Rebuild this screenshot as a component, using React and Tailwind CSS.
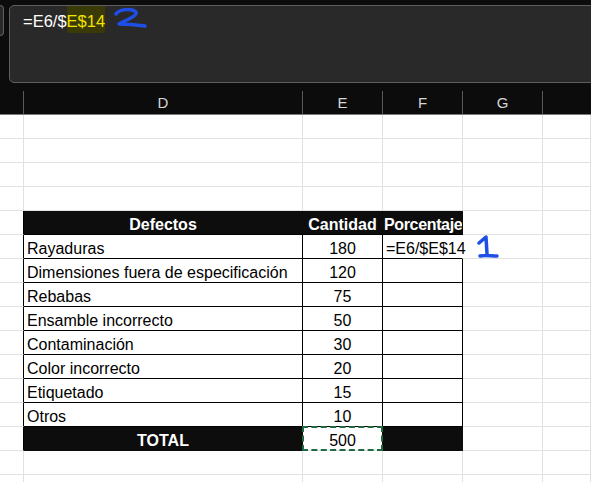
const data = [
  ['Rayaduras', 180],
  ['Dimensiones fuera de especificación', 120],
  ['Rebabas', 75],
  ['Ensamble incorrecto', 50],
  ['Contaminación', 30],
  ['Color incorrecto', 20],
  ['Etiquetado', 15],
  ['Otros', 10],
]

const grid = 'border-r border-b border-[#e1e1e1]'
const line = 'border-r border-b border-black'

function Row({ children }) {
  return <div className="flex h-[24px]">{children}</div>
}

function Cell({ w, cls = grid, children, center, relative }) {
  return (
    <div className={`${w} ${cls} h-[24px] shrink-0 flex items-end leading-[18px] whitespace-nowrap ${center ? 'justify-center' : 'pl-[3px]'} ${relative ? 'relative' : ''}`}>
      {children}
    </div>
  )
}

function EmptyRow() {
  return (
    <Row>
      <Cell w="w-[24px]" />
      <Cell w="w-[279px]" />
      <Cell w="w-[80px]" />
      <Cell w="w-[80px]" />
      <Cell w="w-[80px]" />
      <Cell w="flex-1" />
    </Row>
  )
}

export default function App() {
  return (
    <div className="relative w-[591px] h-[482px] overflow-hidden bg-white text-[16px]" style={{ fontFamily: '"Liberation Sans", Arial, sans-serif' }}>

      {/* Formula bar */}
      <div className="h-[91px] bg-[#0c0c0c] flex items-start">
        <div className="w-[4px] h-[31px] mt-[5px] border border-l-0 border-[#5e5e5e] rounded-r-[4px] bg-[#292929]" />
        <div className="flex-1 ml-[5px] -mr-[10px] mt-[5px] h-[78px] border border-[#5e5e5e] rounded-[5px] bg-[#292929] flex items-start pl-[13px] text-[16.5px]">
          <span className="mt-[6px] leading-[18px] text-white">=E6/$</span>
          <span className="pt-[6px] pb-[3px] leading-[18px] text-[#f2e300] bg-[#3a3a06] rounded-b-[3px]">E$14</span>
          <svg className="ml-[9px] mt-[1px]" width="34" height="22" viewBox="0 0 34 22" fill="none">
            <path d="M2 7 C5 2, 18 1, 22 5 C24 9, 12 13, 5 17 C14 17, 24 18, 31 19" stroke="#1f4ee6" strokeWidth="3.5" strokeLinecap="round" strokeLinejoin="round" />
          </svg>
        </div>
      </div>

      {/* Column headers */}
      <div className="flex h-[24px] bg-[#0c0c0c] border-b border-[#7a7a7a] text-[15px] text-[#d6d6d6]">
        <div className="w-[24px] shrink-0 border-r border-[#5a5a5a]" />
        <div className="w-[279px] shrink-0 border-r border-[#5a5a5a] flex items-center justify-center pt-[2px]">D</div>
        <div className="w-[80px] shrink-0 border-r border-[#5a5a5a] flex items-center justify-center pt-[2px]">E</div>
        <div className="w-[80px] shrink-0 border-r border-[#5a5a5a] flex items-center justify-center pt-[2px]">F</div>
        <div className="w-[80px] shrink-0 border-r border-[#5a5a5a] flex items-center justify-center pt-[2px]">G</div>
        <div className="flex-1" />
      </div>

      {/* Sheet */}
      <EmptyRow />
      <EmptyRow />
      <EmptyRow />
      <EmptyRow />

      <Row>
        <Cell w="w-[24px]" cls="border-r border-b border-r-black border-b-[#e1e1e1]" />
        <Cell w="w-[279px]" cls="bg-[#0d0d0d] border-r border-b border-[#0d0d0d] border-b-black text-white font-bold" center>Defectos</Cell>
        <Cell w="w-[80px]" cls="bg-[#0d0d0d] border-r border-b border-[#0d0d0d] border-b-black text-white font-bold" center>Cantidad</Cell>
        <div className="w-[80px] h-[24px] shrink-0 bg-[#0d0d0d] border-r border-b border-[#0d0d0d] border-b-black text-white font-bold flex items-end leading-[18px] pl-[1px] overflow-hidden whitespace-nowrap tracking-[-0.35px]">Porcentaje</div>
        <Cell w="w-[80px]" />
        <Cell w="flex-1" />
      </Row>

      {data.map(([name, qty], i) => (
        <Row key={name}>
          <Cell w="w-[24px]" cls="border-r border-b border-r-black border-b-[#e1e1e1]" />
          <Cell w="w-[279px]" cls={`${line} text-black`}>{name}</Cell>
          <Cell w="w-[80px]" cls={`${line} text-black`} center>{qty}</Cell>
          {i === 0 ? (
            <Cell w="w-[80px]" cls="border-r border-b border-r-white border-b-black text-black relative z-10">=E6/$E$14</Cell>
          ) : (
            <Cell w="w-[80px]" cls={line} />
          )}
          <Cell w="w-[80px]" />
          <Cell w="flex-1" />
        </Row>
      ))}

      <Row>
        <Cell w="w-[24px]" cls="border-r border-b border-r-black border-b-[#e1e1e1]" />
        <Cell w="w-[279px]" cls="bg-[#0d0d0d] border-r border-b border-[#0d0d0d] text-white font-bold" center>TOTAL</Cell>
        <Cell w="w-[80px]" cls="border-r border-b border-r-[#0d0d0d] border-b-[#e1e1e1] text-black" center relative>
          500
          <div className="absolute -inset-px border-2 border-dashed border-[#1e6b41]" />
        </Cell>
        <Cell w="w-[80px]" cls="bg-[#0d0d0d] border-r border-b border-[#0d0d0d]" />
        <Cell w="w-[80px]" />
        <Cell w="flex-1" />
      </Row>

      <EmptyRow />
      <EmptyRow />

      {/* Handwritten annotation */}
      <svg className="absolute left-[477px] top-[234px]" width="24" height="26" viewBox="0 0 24 26" fill="none">
        <path d="M2 9 L9 3 L10 20 M3 22 C8 21, 14 22, 20 22" stroke="#1f4ee6" strokeWidth="3.5" strokeLinecap="round" strokeLinejoin="round" />
      </svg>
    </div>
  )
}
